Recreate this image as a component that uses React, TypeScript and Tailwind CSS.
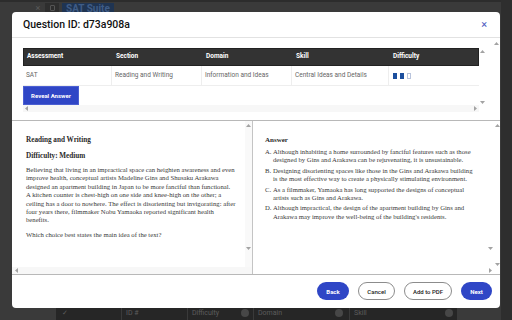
import React from "react";

const sans = { fontFamily: "Roboto, 'Liberation Sans', sans-serif" };
const serif = { fontFamily: "'Liberation Serif', 'DejaVu Serif', serif" };

function Arrow({ dir }: { dir: "up" | "down" | "left" | "right" }) {
  const pts = {
    up: "2.5,1 5,4 0,4",
    down: "0,1 5,1 2.5,4",
    left: "4,0 4,5 1,2.5",
    right: "1,0 1,5 4,2.5",
  }[dir];
  return (
    <svg width="5" height="5" viewBox="0 0 5 5" className="block">
      <polygon points={pts} fill="#a3a3a3" />
    </svg>
  );
}

const columns = ["Assessment", "Section", "Domain", "Skill", "Difficulty"];
const widths = ["w-[89px]", "w-[90px]", "w-[90px]", "w-[97px]", "flex-1"];
const row = ["SAT", "Reading and Writing", "Information and Ideas", "Central Ideas and Details"];

const passage = [
  "Believing that living in an impractical space can heighten awareness and even",
  "improve health, conceptual artists Madeline Gins and Shusaku Arakawa",
  "designed an apartment building in Japan to be more fanciful than functional.",
  "A kitchen counter is chest-high on one side and knee-high on the other; a",
  "ceiling has a door to nowhere. The effect is disorienting but invigorating: after",
  "four years there, filmmaker Nobu Yamaoka reported significant health",
  "benefits.",
];

const choices = [
  ["A.", "Although inhabiting a home surrounded by fanciful features such as those", "designed by Gins and Arakawa can be rejuvenating, it is unsustainable."],
  ["B.", "Designing disorienting spaces like those in the Gins and Arakawa building", "is the most effective way to create a physically stimulating environment."],
  ["C.", "As a filmmaker, Yamaoka has long supported the designs of conceptual", "artists such as Gins and Arakawa."],
  ["D.", "Although impractical, the design of the apartment building by Gins and", "Arakawa may improve the well-being of the building's residents."],
];

export default function App() {
  return (
    <div className="relative w-[512px] h-[320px] overflow-hidden bg-[#3a3a3a]" style={sans}>
      {/* dimmed page behind the dialog */}
      <div className="flex flex-col justify-between h-full">
        <div className="flex items-start h-[12px] border-t-[2px] border-[#2c2c2c]">
          <span className="ml-[34px] w-[8px] text-center mt-[1px] text-[9px] leading-[10px] text-[#5a5a5a]">×</span>
          <div className="ml-[3px] w-[14px] h-[10px] mt-[1px] bg-[#2e2e2e] flex items-center justify-center">
            <div className="w-[5px] h-[6px] border border-[#555] rounded-[1px]" />
          </div>
          <div className="ml-[3px] w-[52px] h-[10px] mt-[1px] pl-[4px] bg-[#1f3452] text-[10px] font-bold leading-[12px] text-[#3f5c86] whitespace-nowrap">
            SAT Suite
          </div>
        </div>
        <div className="flex h-[12px] text-[7px] leading-[11px] text-[#5c5c5c]">
          <div className="w-[56px]" />
          <div className="w-[66px] bg-[#262626] border-r border-[#3a3a3a] pl-[6px]">✓</div>
          <div className="w-[66px] bg-[#262626] border-r border-[#3a3a3a] pl-[4px]">ID #</div>
          <div className="w-[66px] bg-[#262626] border-r border-[#3a3a3a] pl-[4px] flex justify-between pr-[4px]">
            <span>Difficulty</span>
            <span className="w-[8px] h-[8px] mt-[1px] rounded-full bg-[#474747]" />
          </div>
          <div className="w-[96px] bg-[#262626] border-r border-[#3a3a3a] pl-[4px] flex justify-between pr-[6px]">
            <span>Domain</span>
            <span className="w-[8px] h-[8px] mt-[1px] rounded-full bg-[#474747]" />
          </div>
          <div className="w-[107px] bg-[#262626] pl-[4px] flex justify-between pr-[4px]">
            <span>Skill</span>
            <span className="w-[8px] h-[8px] mt-[1px] rounded-full bg-[#474747]" />
          </div>
          <div className="flex-1" />
        </div>
      </div>
      <div className="absolute top-0 right-0 w-[11px] h-full bg-[#2e2e2e]" />

      {/* dialog */}
      <div className="absolute left-[12px] top-[12px] w-[488px] h-[296px] bg-white rounded-[4px] flex flex-col overflow-hidden">
        <div className="h-[26px] flex items-center justify-between pl-[11px] pr-[13px] border-b border-[#e2e2e2]">
          <span className="text-[10.5px] font-medium text-[#111]">Question ID: d73a908a</span>
          <span className="text-[11px] leading-[11px] text-[#4a5ac0]">×</span>
        </div>

        {/* meta table */}
        <div className="h-[82px] flex">
          <div className="flex-1 pl-[11px] pt-[10px]">
            <div className="flex w-[463px] h-[64px]">
              <div className="w-[456px] flex flex-col">
                <div className="flex h-[18px] bg-[#333] border border-[#222] text-white text-[6.5px] font-bold items-center">
                  {columns.map((c, i) => (
                    <div key={c} className={`${widths[i]} pl-[3px]`}>{c}</div>
                  ))}
                </div>
                <div className="flex h-[20px] border-b border-[#eee] text-[6.5px] text-[#666] items-center">
                  {row.map((c, i) => (
                    <div key={c} className={`${widths[i]} h-full flex items-center pl-[3px] border-r border-[#eee]`}>{c}</div>
                  ))}
                  <div className="flex-1 flex items-center gap-[3px] pl-[4px]">
                    <div className="w-[4px] h-[6px] bg-[#1c4f9e]" />
                    <div className="w-[4px] h-[6px] bg-[#1c4f9e]" />
                    <div className="w-[4px] h-[6px] border border-[#b9c4dc]" />
                  </div>
                </div>
                <div className="h-[19px] flex">
                  <button className="w-[56px] h-full bg-[#2f46c6] border border-[#4b5fd2] text-white text-[6px] font-bold">
                    Reveal Answer
                  </button>
                </div>
                <div className="h-[7px] bg-[#f7f7f7] flex items-center justify-between pl-[1px] pr-[1px]">
                  <Arrow dir="left" />
                  <Arrow dir="right" />
                </div>
              </div>
              <div className="w-[7px] flex flex-col items-center justify-between pt-[1px] pb-[7px]">
                <Arrow dir="up" />
                <Arrow dir="down" />
              </div>
            </div>
          </div>
          <div className="w-[7px] flex flex-col items-center pt-[3px]">
            <Arrow dir="up" />
          </div>
        </div>

        {/* question and answer panes */}
        <div className="h-[155px] flex border-t border-b border-[#b8b8b8]">
          <div className="w-[241px] border-r border-[#c4c4c4] flex flex-col">
            <div className="flex-1 flex">
              <div className="flex-1 pl-[14px] pt-[14px] text-[#3a3a3a]" style={serif}>
                <div className="text-[7.2px] font-bold leading-[10px] text-[#2a2a2a]">Reading and Writing</div>
                <div className="mt-[6px] text-[7.2px] font-bold leading-[10px] text-[#2a2a2a]">Difficulty: Medium</div>
                <div className="mt-[5px] text-[6.7px] leading-[8.4px]">
                  {passage.map((l) => (
                    <div key={l} className="whitespace-nowrap">{l}</div>
                  ))}
                </div>
                <div className="mt-[6px] text-[6.7px] leading-[8.4px] whitespace-nowrap">
                  Which choice best states the main idea of the text?
                </div>
              </div>
              <div className="w-[7px] bg-[#f9f9f9] flex flex-col items-center justify-between pt-[2px] pb-[16px]">
                <Arrow dir="up" />
                <Arrow dir="down" />
              </div>
            </div>
            <div className="h-[7px] bg-[#f7f7f7] flex items-center pl-[2px]">
              <Arrow dir="left" />
            </div>
          </div>
          <div className="flex-1 flex">
            <div className="flex-1 flex flex-col">
              <div className="flex-1 flex">
                <div className="flex-1 pl-[12px] pt-[14px] text-[#3a3a3a]" style={serif}>
                  <div className="text-[7px] font-bold leading-[10px] text-[#2a2a2a]">Answer</div>
                  <div className="mt-[3px] text-[6.7px] leading-[8.4px] flex flex-col gap-[2px]">
                    {choices.map(([k, a, b]) => (
                      <div key={k} className="flex whitespace-nowrap">
                        <span className="w-[8px]">{k}</span>
                        <div>
                          <div>{a}</div>
                          <div>{b}</div>
                        </div>
                      </div>
                    ))}
                  </div>
                </div>
                <div className="w-[7px] flex flex-col items-center justify-end pb-[16px]">
                  <Arrow dir="down" />
                </div>
              </div>
              <div className="h-[7px] flex items-center justify-end pr-[1px]">
                <Arrow dir="right" />
              </div>
            </div>
            <div className="w-[6px] flex flex-col items-center justify-between pt-[2px] pb-[7px]">
              <Arrow dir="up" />
              <Arrow dir="down" />
            </div>
          </div>
        </div>

        {/* footer */}
        <div className="flex-1 flex items-center justify-end gap-[9px] pr-[8px] pb-[1px]">
          <button className="w-[32px] h-[18px] rounded-full bg-[#2f46c6] text-white text-[6px] font-bold">Back</button>
          <button className="w-[37px] h-[18px] rounded-full border border-[#8c8c8c] text-[#222] text-[6px] font-medium">Cancel</button>
          <button className="w-[48px] h-[18px] rounded-full border border-[#8c8c8c] text-[#222] text-[6px] font-medium">Add to PDF</button>
          <button className="w-[31px] h-[18px] rounded-full bg-[#2f46c6] text-white text-[6px] font-bold">Next</button>
        </div>
      </div>
    </div>
  );
}
